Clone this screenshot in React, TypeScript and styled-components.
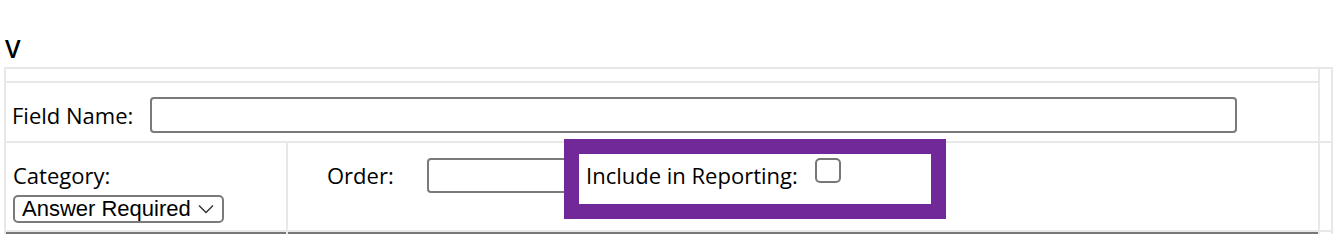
import React from "react";
import styled, { createGlobalStyle } from "styled-components";

const GlobalStyle = createGlobalStyle`
  html, body {
    margin: 0;
    padding: 0;
    background: #ffffff;
  }
  body {
    font-family: "Open Sans", "Noto Sans", sans-serif;
    color: #000;
  }
`;

const Page = styled.div`
  padding: 32px 4px 0 4px;
  width: 1337px;
  height: 234px;
  box-sizing: border-box;
  overflow: hidden;
`;

const Heading = styled.h2`
  margin: 0 0 3px 1px;
  font-size: 25px;
  line-height: 32px;
  font-weight: 600;
`;

// light gray grid lines come from the background showing through the gaps
const Frame = styled.div`
  display: grid;
  width: 1329px;
  box-sizing: border-box;
  padding: 2px;
  gap: 2px;
  background: #e8e8e8;
  grid-template-columns: 280px 1030px 11px;
  grid-template-rows: 12px 58px 87px 40px;
`;

const Cell = styled.div<{ $col: string; $row: string }>`
  background: #fff;
  grid-column: ${(p) => p.$col};
  grid-row: ${(p) => p.$row};
  position: relative;
`;

const FieldRow = styled(Cell)`
  display: flex;
  align-items: center;
  padding: 14px 0 8px 6px;
  box-sizing: border-box;
`;

const Label = styled.label`
  font-size: 22px;
  line-height: 29px;
  white-space: nowrap;
`;

const TextInput = styled.input<{ $w: number }>`
  width: ${(p) => p.$w}px;
  height: 36px;
  box-sizing: border-box;
  border: 2px solid #7a7a7a;
  border-radius: 4px;
  background: #fff;
  padding: 0 6px;
  font-size: 20px;
  font-family: "Liberation Sans", Arial, sans-serif;
  outline: none;
`;

const FieldInput = styled(TextInput)`
  margin-left: 17px;
`;

const CategoryCell = styled(Cell)`
  padding: 18px 0 0 7px;
  box-sizing: border-box;
`;

const BlockLabel = styled(Label)`
  display: block;
`;

const SelectBox = styled.span`
  display: inline-flex;
  align-items: center;
  margin-top: 5px;
  width: 211px;
  height: 28px;
  box-sizing: border-box;
  border: 2px solid #7a7a7a;
  border-radius: 5px;
  padding: 0 8px 0 7px;
  background: #fff;
`;

const Select = styled.select`
  appearance: none;
  -webkit-appearance: none;
  border: none;
  background: transparent;
  padding: 0;
  margin: 0;
  flex: 1;
  font-family: "Liberation Sans", Arial, sans-serif;
  font-size: 22px;
  line-height: 24px;
  color: #000;
  outline: none;
`;

const OrderCell = styled(Cell)`
  display: flex;
  align-items: flex-start;
  padding: 15px 0 0 39px;
  box-sizing: border-box;
`;

const InlineLabel = styled(Label)<{ $w?: number; $ml?: number }>`
  margin-top: 3px;
  margin-left: ${(p) => p.$ml ?? 0}px;
  ${(p) => (p.$w ? `width: ${p.$w}px;` : "")}
`;

const OrderInput = styled(TextInput)`
  height: 35px;
`;

const Checkbox = styled.input`
  appearance: none;
  -webkit-appearance: none;
  margin: 0 0 0 17px;
  width: 26px;
  height: 25px;
  box-sizing: border-box;
  border: 2px solid #777;
  border-radius: 5px;
  background: #fff;
`;

// annotation outline drawn over the form
const Highlight = styled.div`
  position: absolute;
  left: 276px;
  top: -4px;
  width: 382px;
  height: 80px;
  box-sizing: border-box;
  border: 15px solid #71299a;
  pointer-events: none;
  z-index: 2;
`;

const NextRowCell = styled(Cell)`
  border-top: 2px solid #777;
`;

const Chevron = () => (
  <svg width="16" height="10" viewBox="0 0 16 10" fill="none">
    <polyline points="1,1.5 8,8.5 15,1.5" stroke="#333" strokeWidth="1.4" />
  </svg>
);

export default function App() {
  return (
    <>
      <GlobalStyle />
      <Page>
        <Heading>V</Heading>
        <Frame>
          <Cell $col="1 / 3" $row="1" />
          <Cell $col="3" $row="1 / 3" />
          <FieldRow $col="1 / 3" $row="2">
            <Label>Field Name:</Label>
            <FieldInput $w={1087} type="text" />
          </FieldRow>

          <CategoryCell $col="1" $row="3">
            <BlockLabel>Category:</BlockLabel>
            <SelectBox>
              <Select defaultValue="required">
                <option value="required">Answer Required</option>
                <option value="optional">Answer Optional</option>
              </Select>
              <Chevron />
            </SelectBox>
          </CategoryCell>
          <OrderCell $col="2" $row="3">
            <InlineLabel $w={100}>Order:</InlineLabel>
            <OrderInput $w={143} type="text" />
            <InlineLabel $ml={16}>Include in Reporting:</InlineLabel>
            <Checkbox type="checkbox" />
            <Highlight />
          </OrderCell>
          <Cell $col="3" $row="3" />

          <NextRowCell $col="1" $row="4" />
          <NextRowCell $col="2" $row="4" />
          <Cell $col="3" $row="4" />
        </Frame>
      </Page>
    </>
  );
}
